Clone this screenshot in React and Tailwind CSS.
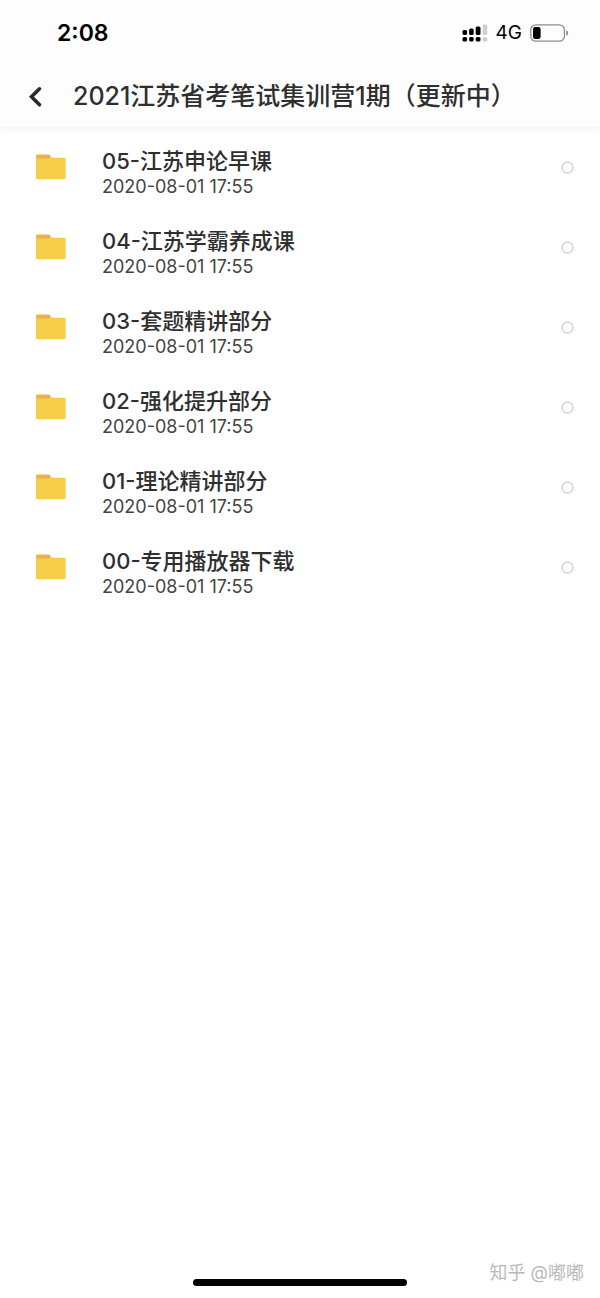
import { useState } from 'react';

const folders = [
  { id: '05', name: '05-江苏申论早课', date: '2020-08-01 17:55' },
  { id: '04', name: '04-江苏学霸养成课', date: '2020-08-01 17:55' },
  { id: '03', name: '03-套题精讲部分', date: '2020-08-01 17:55' },
  { id: '02', name: '02-强化提升部分', date: '2020-08-01 17:55' },
  { id: '01', name: '01-理论精讲部分', date: '2020-08-01 17:55' },
  { id: '00', name: '00-专用播放器下载', date: '2020-08-01 17:55' },
];

const SignalIcon = () => (
  <svg width="26" height="18" viewBox="0 0 26 18" aria-hidden="true">
    <g fill="#000">
      <rect x="0.5" y="6" width="4.6" height="5" rx="1.5" />
      <rect x="7.1" y="4.5" width="4.6" height="6.5" rx="1.5" />
      <rect x="13.7" y="2.5" width="4.8" height="8.5" rx="1.5" />
      <rect x="0.5" y="13" width="4.6" height="4.6" rx="1.6" />
      <rect x="7.1" y="13" width="4.6" height="4.6" rx="1.6" />
      <rect x="13.7" y="13" width="4.8" height="4.6" rx="1.6" />
    </g>
    <g fill="#cfcfcf">
      <rect x="20.7" y="0.5" width="4.6" height="10.5" rx="1.5" />
      <rect x="20.7" y="13" width="4.6" height="4.6" rx="1.6" />
    </g>
  </svg>
);

const BatteryIcon = () => (
  <svg width="39" height="18" viewBox="0 0 39 18" aria-hidden="true">
    <rect x="0.8" y="0.8" width="33.6" height="16.4" rx="5" fill="none" stroke="#8e8e8e" strokeWidth="1.3" />
    <rect x="3" y="3" width="7.6" height="12" rx="2.2" fill="#000" />
    <path d="M36.2 6.2c1.3.5 2 1.5 2 2.8s-.7 2.300-2 2.800z" fill="#8e8e8e" />
  </svg>
);

const FolderIcon = () => (
  <svg width="30" height="26" viewBox="0 0 30 26" className="shrink-0" aria-hidden="true">
    <path d="M0 2.200C0 1.100.7.500 1.700.500H12.300c.8 0 1.300.3 1.700.9L15.800 4.500V8H0z" fill="#e2b546" />
    <path d="M0 4.600H12.500l1.500-.9H28c1 0 1.700.7 1.700 1.700V23.600c0 1-.7 1.700-1.700 1.700H1.700C.7 25.300 0 24.600 0 23.600z" fill="#f7ce4a" />
  </svg>
);

const FolderRow = ({ folder, checked, onToggle }) => (
  <li>
    <label className="flex h-20 items-center pl-9 pr-[26px]">
      <FolderIcon />
      <span className="ml-9 flex min-w-0 flex-1 flex-col pt-3">
        <span className="truncate text-[22px] leading-7 font-medium">{folder.name}</span>
        <span className="text-[18px] leading-6 text-[#444]">{folder.date}</span>
      </span>
      <input
        type="checkbox"
        checked={checked}
        onChange={onToggle}
        className="size-[13px] shrink-0 appearance-none rounded-full border-2 border-[#dedede] checked:border-[#f7ce4a] checked:bg-[#f7ce4a]"
      />
    </label>
  </li>
);

const App = () => {
  const [selected, setSelected] = useState([]);

  const toggle = (id) => {
    setSelected((prev) => (prev.includes(id) ? prev.filter((s) => s !== id) : [...prev, id]));
  };

  return (
    <div className="flex min-h-screen flex-col bg-white font-[Inter,'Noto_Sans_CJK_SC',sans-serif] text-[#2f2f2f]">
      <header className="bg-[#fdfdfd] shadow-[0_2px_8px_rgba(0,0,0,0.06)]">
        {/* Status bar */}
        <div className="flex h-[66px] items-center justify-between pl-[57px] pr-[31px] text-black">
          <span className="text-[23px] font-semibold">2:08</span>
          <div className="flex items-center">
            <SignalIcon />
            <span className="ml-2 mr-2 text-[19px]">4G</span>
            <BatteryIcon />
          </div>
        </div>

        {/* Title bar */}
        <div className="flex h-[61px] items-center pl-7">
          <button type="button" aria-label="返回" className="flex w-[45px] shrink-0">
            <svg width="16" height="22" viewBox="0 0 16 22" fill="none" aria-hidden="true">
              <path d="M11.500 2.800 3.500 10.800l8 8" stroke="#2a2a2a" strokeWidth="3.600" strokeLinecap="round" strokeLinejoin="miter" />
            </svg>
          </button>
          <h1 className="truncate text-[25px] font-medium">2021江苏省考笔试集训营1期（更新中）</h1>
        </div>
      </header>

      {/* Folder list */}
      <ul className="flex-1">
        {folders.map((f) => (
          <FolderRow key={f.id} folder={f} checked={selected.includes(f.id)} onToggle={() => toggle(f.id)} />
        ))}
      </ul>

      {/* Home indicator */}
      <footer className="grid h-[52px] grid-cols-[1fr_214px_1fr] items-center">
        <div className="col-start-2 mt-5 h-[7px] rounded-full bg-black" />
        <span className="pr-4 text-right text-[18px] text-[#b9b9b9]">知乎 @嘟嘟</span>
      </footer>
    </div>
  );
};

export default App;
